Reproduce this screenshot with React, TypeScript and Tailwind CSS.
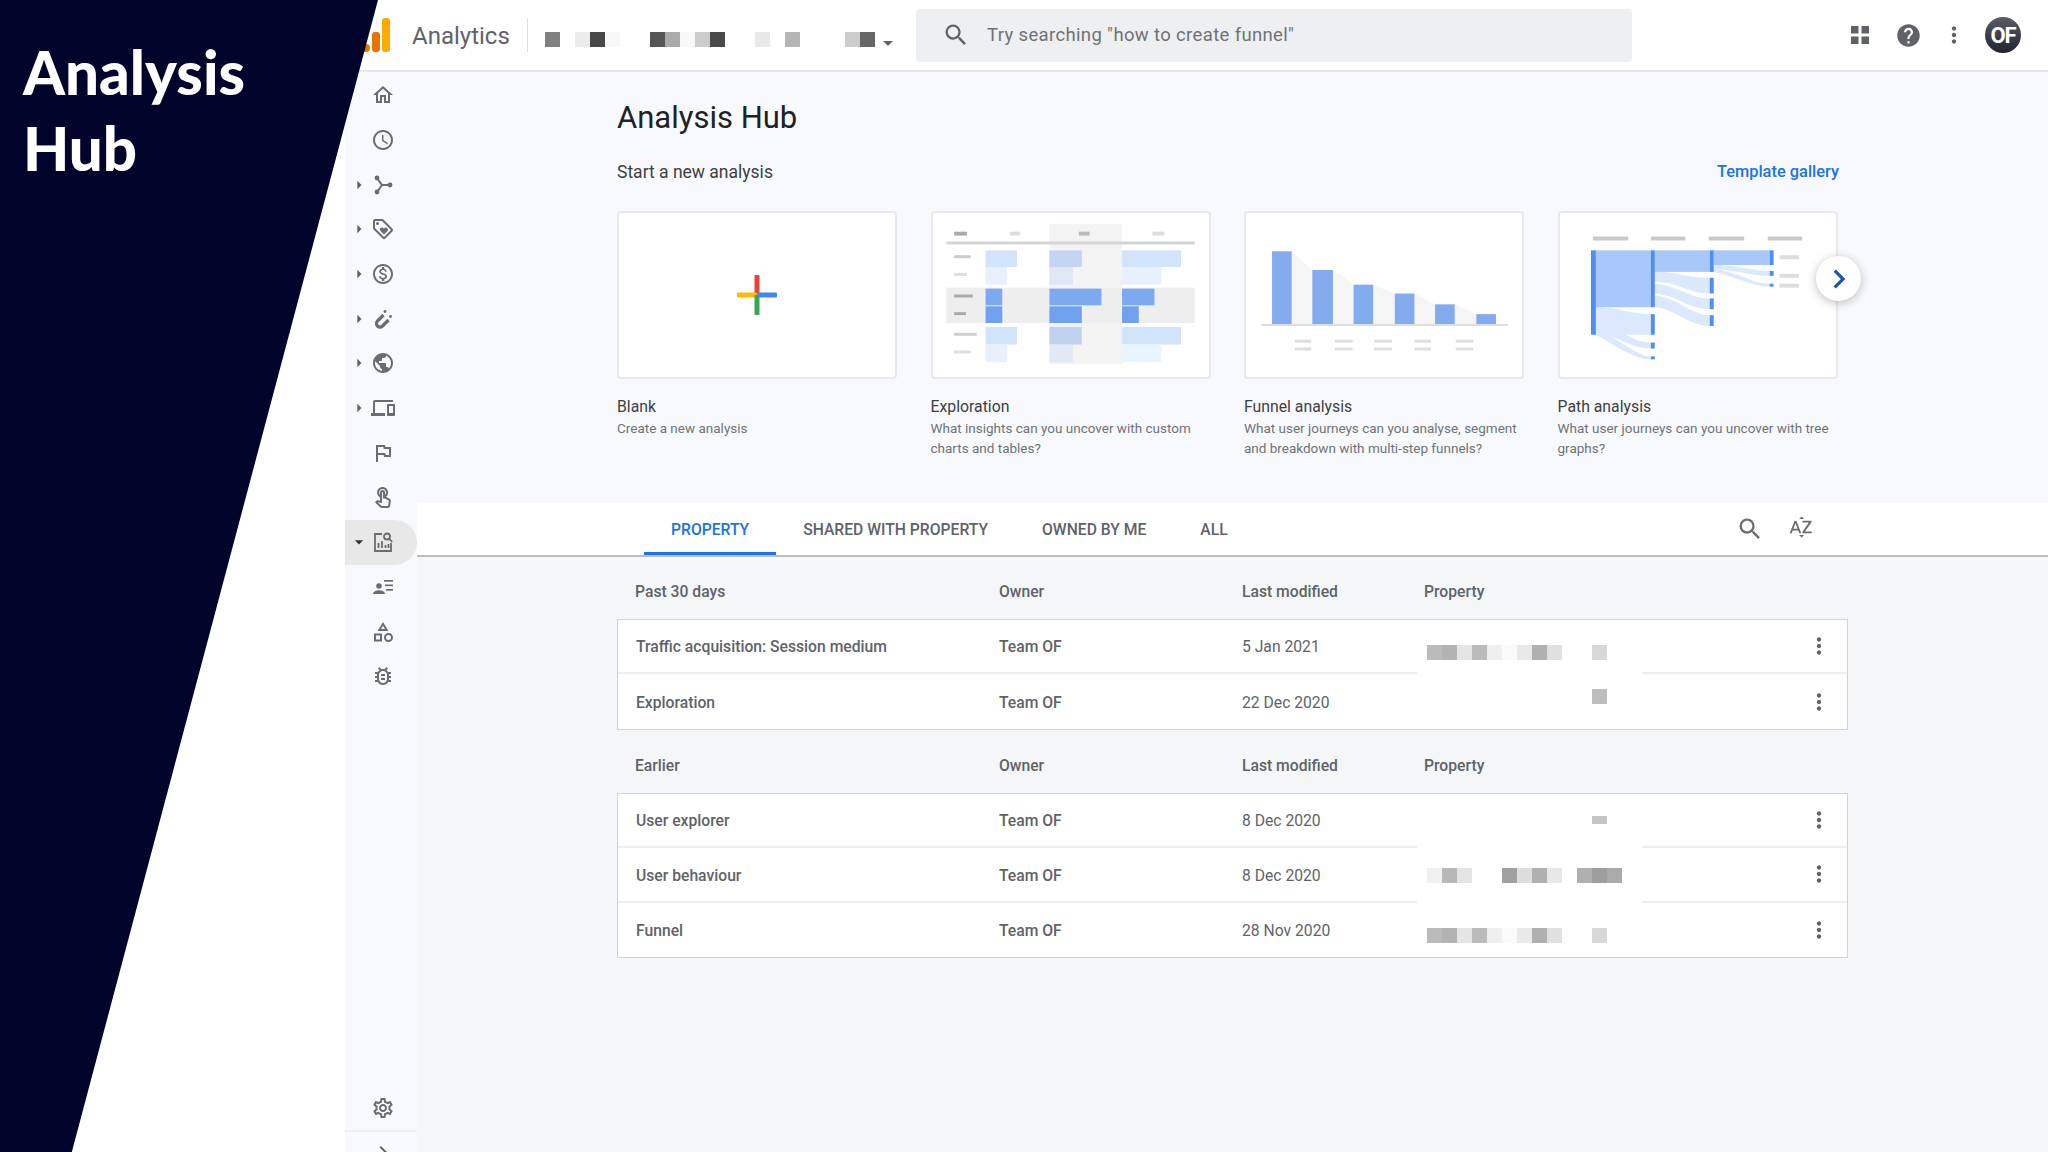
import React from "react";
import {
  MdOutlineHome,
  MdAccessTime,
  MdOutlineLoyalty,
  MdOutlineMonetizationOn,
  MdPublic,
  MdOutlineDevices,
  MdOutlineAssistantPhoto,
  MdOutlineTouchApp,
  MdOutlineCategory,
  MdOutlineBugReport,
  MdOutlineSettings,
  MdOutlineSortByAlpha,
  MdSearch,
  MdHelp,
  MdMoreVert,
  MdChevronRight,
  MdArrowRight,
  MdArrowDropDown,
} from "react-icons/md";

const AcquisitionIcon = ({ className }: { className?: string }) => (
  <svg viewBox="0 0 24 24" className={className}>
    <path d="M6 5l5 7h8M6 19l5-7" fill="none" stroke="currentColor" strokeWidth="2" />
    <circle cx="6" cy="5" r="2.4" fill="currentColor" />
    <circle cx="6" cy="19" r="2.4" fill="currentColor" />
    <circle cx="19" cy="12" r="2.4" fill="currentColor" />
  </svg>
);

const MagnetIcon = ({ className }: { className?: string }) => (
  <svg viewBox="0 0 24 24" className={className}>
    <path d="M12.500 8l-6 6a3.400 3.400 0 0 0 5 5l6-6" fill="none" stroke="currentColor" strokeWidth="3.200" />
    <circle cx="14" cy="4.500" r="1.400" fill="currentColor" />
    <circle cx="19.500" cy="9.500" r="1.400" fill="currentColor" />
  </svg>
);

const AnalysisIcon = ({ className }: { className?: string }) => (
  <svg viewBox="0 0 24 24" className={className} fill="none" stroke="currentColor">
    <path d="M11 4H4v17h16v-8" strokeWidth="1.800" />
    <path d="M7.500 18v-5M11 18v-7M14.500 18v-3M17.500 18v-4" strokeWidth="1.800" />
    <circle cx="16" cy="6.500" r="3" strokeWidth="1.800" />
    <path d="M18.200 8.800l3 3" strokeWidth="1.800" />
  </svg>
);

const UsersIcon = ({ className }: { className?: string }) => (
  <svg viewBox="0 0 24 24" className={className} fill="currentColor">
    <circle cx="8" cy="11" r="2.800" />
    <path d="M2 19c0-2.600 3.400-3.800 6-3.800s6 1.200 6 3.800z" />
    <rect x="13" y="5" width="9" height="1.700" />
    <rect x="14" y="9.500" width="8" height="1.700" />
    <rect x="15" y="14" width="7" height="1.700" />
  </svg>
);

const NAV = [
  { icon: MdOutlineHome },
  { icon: MdAccessTime },
  { icon: AcquisitionIcon, caret: true },
  { icon: MdOutlineLoyalty, caret: true },
  { icon: MdOutlineMonetizationOn, caret: true },
  { icon: MagnetIcon, caret: true },
  { icon: MdPublic, caret: true },
  { icon: MdOutlineDevices, caret: true },
  { icon: MdOutlineAssistantPhoto },
  { icon: MdOutlineTouchApp },
  { icon: AnalysisIcon, active: true },
  { icon: UsersIcon },
  { icon: MdOutlineCategory },
  { icon: MdOutlineBugReport },
];

const Mosaic = ({ cells, size = "h-[15px]" }: { cells: string[]; size?: string }) => (
  <div className="flex">
    {cells.map((c, i) => (
      <div key={i} className={`w-[15px] ${size} ${c}`} />
    ))}
  </div>
);

const HEADER_CELLS = [
  "bg-[#808080]", "", "bg-[#ececec]", "bg-[#484848]", "bg-[#f8f8f8]", "", "",
  "bg-[#555555]", "bg-[#aaaaaa]", "bg-[#f8f8f8]", "bg-[#cccccc]", "bg-[#4a4a4a]", "", "",
  "bg-[#e8e8e8]", "", "bg-[#b5b5b5]", "", "", "", "bg-[#cccccc]", "bg-[#666666]",
];

const LONG_CELLS = [
  "bg-[#bbbbbb]", "bg-[#b3b3b3]", "bg-[#e5e5e5]", "bg-[#bbbbbb]", "bg-[#efefef]", "bg-[#fafafa]",
  "bg-[#e9e9e9]", "bg-[#b0b0b0]", "bg-[#e0e0e0]", "", "", "bg-[#d8d8d8]",
];
const SINGLE_CELLS = ["", "", "", "", "", "", "", "", "", "", "", "bg-[#bdbdbd]"];
const PARTIAL_CELLS = ["", "", "", "", "", "", "", "", "", "", "", "bg-[#c5c5c5]"];
const BEHAVIOUR_CELLS = [
  "bg-[#f0f0f0]", "bg-[#b8b8b8]", "bg-[#e4e4e4]", "", "", "bg-[#a0a0a0]", "bg-[#dddddd]",
  "bg-[#b0b0b0]", "bg-[#e8e8e8]", "", "bg-[#b0b0b0]", "bg-[#9e9e9e]", "bg-[#aaaaaa]",
];

const Bars = ({ rects }: { rects: [number, number, number, number, string][] }) => (
  <>
    {rects.map(([x, y, w, h, fill], i) => (
      <rect key={i} x={x} y={y} width={w} height={h} fill={fill} />
    ))}
  </>
);

const ExplorationThumb = () => (
  <svg viewBox="0 0 280 167" className="h-full w-full blur-[0.6px]">
    <Bars
      rects={[
        [118, 11, 74, 143, "#f3f3f3"],
        [13, 76, 253, 36, "#eeeeee"],
        [13, 29, 253, 3, "#d4d4d4"],
        [21, 19, 13, 4, "#aaaaaa"],
        [78, 19, 10, 4, "#dddddd"],
        [148, 19, 11, 4, "#bbbbbb"],
        [223, 19, 12, 4, "#dddddd"],
        [21, 43, 17, 3, "#cccccc"],
        [21, 61, 13, 3, "#dddddd"],
        [21, 83, 19, 3, "#aaaaaa"],
        [21, 101, 12, 3, "#aaaaaa"],
        [21, 122, 23, 3, "#cccccc"],
        [21, 140, 17, 3, "#dddddd"],
        [53, 38, 32, 17, "#d2e3fc"],
        [53, 55, 22, 18, "#e8f0fe"],
        [53, 77, 17, 17, "#7baaf0"],
        [53, 95, 17, 17, "#6fa1ee"],
        [53, 116, 32, 18, "#d2e3fc"],
        [53, 134, 22, 18, "#e8f0fe"],
        [118, 38, 33, 17, "#c3d5f3"],
        [118, 55, 24, 18, "#e0e7f3"],
        [118, 77, 53, 17, "#7baaf0"],
        [118, 95, 33, 17, "#6fa1ee"],
        [118, 116, 33, 18, "#c0d2f0"],
        [118, 134, 24, 18, "#e0e9f5"],
        [192, 38, 60, 17, "#d2e3fc"],
        [192, 55, 40, 18, "#e8f0fe"],
        [192, 77, 33, 17, "#7baaf0"],
        [192, 95, 17, 17, "#6fa1ee"],
        [192, 116, 60, 18, "#d2e3fc"],
        [192, 134, 40, 18, "#e8f4fe"],
      ]}
    />
  </svg>
);

const FunnelThumb = () => (
  <svg viewBox="0 0 280 167" className="h-full w-full blur-[0.6px]">
    <path d="M46 39L67 58V114H46zM88 58L109 73V114H88zM129 73L151 82V114H129zM171 82L192 93V114H171zM212 93L234 103V114H212z" fill="#f5f5f5" />
    <Bars
      rects={[
        [26, 39, 20, 75, "#84abed"],
        [67, 58, 21, 56, "#84abed"],
        [109, 73, 20, 41, "#84abed"],
        [151, 82, 20, 32, "#84abed"],
        [192, 93, 20, 21, "#84abed"],
        [234, 103, 20, 11, "#84abed"],
        [15, 113, 251, 2, "#dddddd"],
        [49, 129, 17, 3, "#dddddd"],
        [90, 129, 18, 3, "#dddddd"],
        [130, 129, 18, 3, "#dddddd"],
        [171, 129, 17, 3, "#dddddd"],
        [213, 129, 18, 3, "#dddddd"],
        [49, 137, 17, 3, "#dddddd"],
        [90, 137, 18, 3, "#dddddd"],
        [130, 137, 18, 3, "#dddddd"],
        [171, 137, 17, 3, "#dddddd"],
        [213, 137, 18, 3, "#dddddd"],
      ]}
    />
  </svg>
);

const PathThumb = () => (
  <svg viewBox="0 0 280 167" className="h-full w-full blur-[0.6px]">
    <path
      d="M36 96C60 96 70 103 92 103V124H36zM36 112C60 118 75 132 92 132V138C75 138 60 128 36 120zM36 118C60 128 78 146 92 146V149C74 149 55 134 36 124z"
      fill="#dbe8fd"
    />
    <path
      d="M96 60C120 60 130 66 152 66V82C130 82 120 70 96 70zM96 72C120 74 132 87 152 87V98C130 98 120 84 96 82zM96 84C120 86 132 104 152 104V115C130 115 118 98 96 96z"
      fill="#dbe8fd"
    />
    <path d="M156 53C178 53 195 59 213 59V64C195 64 178 58 156 57zM156 57C178 59 195 72 213 72V75C195 75 176 64 156 60z" fill="#dbe8fd" />
    <Bars
      rects={[
        [33, 24, 36, 4, "#c8c8c8"],
        [92, 24, 35, 4, "#c8c8c8"],
        [151, 24, 36, 4, "#c8c8c8"],
        [211, 24, 35, 4, "#c8c8c8"],
        [36, 38, 56, 58, "#a8c7fa"],
        [96, 38, 56, 22, "#a8c7fa"],
        [156, 38, 57, 15, "#a8c7fa"],
        [31, 38, 5, 86, "#4f8ff0"],
        [92, 38, 4, 58, "#4f8ff0"],
        [92, 103, 4, 21, "#4f8ff0"],
        [92, 132, 4, 6, "#4f8ff0"],
        [92, 146, 4, 3, "#4f8ff0"],
        [152, 38, 4, 22, "#4f8ff0"],
        [152, 66, 4, 16, "#4f8ff0"],
        [152, 87, 4, 11, "#4f8ff0"],
        [152, 104, 4, 11, "#4f8ff0"],
        [213, 38, 4, 15, "#4f8ff0"],
        [213, 59, 4, 5, "#4f8ff0"],
        [213, 72, 4, 3, "#4f8ff0"],
        [223, 43, 20, 4, "#dddddd"],
        [223, 62, 20, 4, "#dddddd"],
        [223, 72, 20, 4, "#dddddd"],
      ]}
    />
  </svg>
);

const BlankThumb = () => (
  <div className="flex h-full w-full items-center justify-center">
    <svg viewBox="0 0 40 40" className="h-[40px] w-[40px]">
      <rect x="17.500" y="0" width="5" height="20" rx="1" fill="#ea4335" />
      <rect x="0" y="17.500" width="20" height="5" rx="1" fill="#fbbc04" />
      <rect x="17.500" y="20" width="5" height="20" rx="1" fill="#34a853" />
      <rect x="20" y="17.500" width="20" height="5" rx="1" fill="#4285f4" />
    </svg>
  </div>
);

const CARDS = [
  { name: "Blank", desc: "Create a new analysis", thumb: BlankThumb },
  { name: "Exploration", desc: "What insights can you uncover with custom charts and tables?", thumb: ExplorationThumb },
  { name: "Funnel analysis", desc: "What user journeys can you analyse, segment and breakdown with multi-step funnels?", thumb: FunnelThumb },
  { name: "Path analysis", desc: "What user journeys can you uncover with tree graphs?", thumb: PathThumb },
];

const TABS = ["Property", "Shared with property", "Owned by me", "All"];

const TABLES = [
  {
    label: "Past 30 days",
    head: "h-[62px] pt-[8px]",
    rows: [
      { name: "Traffic acquisition: Session medium", date: "5 Jan 2021", cells: LONG_CELLS, top: "mt-[25px]" },
      { name: "Exploration", date: "22 Dec 2020", cells: SINGLE_CELLS, top: "mt-[15px]" },
    ],
  },
  {
    label: "Earlier",
    head: "h-[63px] pt-[9px]",
    rows: [
      { name: "User explorer", date: "8 Dec 2020", cells: PARTIAL_CELLS, top: "mt-[22px]", short: true },
      { name: "User behaviour", date: "8 Dec 2020", cells: BEHAVIOUR_CELLS, top: "mt-[20px]" },
      { name: "Funnel", date: "28 Nov 2020", cells: LONG_CELLS, top: "mt-[25px]" },
    ],
  },
];

export default function App() {
  return (
    <div className="relative flex h-[1152px] w-[2048px] flex-col overflow-hidden bg-white font-['Roboto',sans-serif]">
      <header className="flex h-[72px] shrink-0 items-center border-b-2 border-[#e6e6e8] bg-white pl-[362px] pr-[27px]">
        <svg viewBox="0 0 30 34" className="h-[34px] w-[30px]">
          <rect x="20" y="0" width="8" height="34" rx="3" fill="#f9ab00" />
          <rect x="10" y="14" width="8" height="20" rx="3" fill="#e37400" />
          <circle cx="4" cy="30" r="4" fill="#e37400" />
        </svg>
        <span className="ml-[20px] mt-[2px] w-[115px] text-[24px] text-[#5f6368]">Analytics</span>
        <div className="h-[34px] w-px bg-[#e0e0e0]" />
        <div className="ml-[17px] mt-[8px] flex items-center">
          <Mosaic cells={HEADER_CELLS} />
          <MdArrowDropDown className="ml-[1px] mt-[8px] h-[24px] w-[24px] text-[#5f6368]" />
        </div>
        <div className="ml-[16px] flex h-[53px] w-[716px] items-center rounded bg-[#eeeff0] pl-[26px]">
          <MdSearch className="h-[28px] w-[28px] text-[#5f6368]" />
          <span className="ml-[17px] mt-[1px] text-[18.500px] tracking-[0.35px] text-[#6f7275]">Try searching "how to create funnel"</span>
        </div>
        <div className="ml-auto flex items-center">
          <svg viewBox="0 0 18 18" className="h-[18px] w-[18px] text-[#5f6368]" fill="currentColor">
            <rect x="0" y="0" width="7.500" height="7.500" />
            <rect x="10.500" y="0" width="7.500" height="7.500" />
            <rect x="0" y="10.500" width="7.500" height="7.500" />
            <rect x="10.500" y="10.500" width="7.500" height="7.500" />
          </svg>
          <MdHelp className="ml-[26px] h-[27px] w-[27px] text-[#5f6368]" />
          <MdMoreVert className="ml-[19px] h-[26px] w-[26px] text-[#5f6368]" />
          <div className="ml-[18px] flex h-[36px] w-[36px] items-center justify-center rounded-full bg-gradient-to-b from-[#5a5c66] to-[#23252e] text-[22px] font-bold tracking-[-1px] text-white">
            OF
          </div>
        </div>
      </header>

      <div className="flex min-h-0 flex-1 pl-[345px]">
        <nav className="flex h-[1082px] w-[72px] shrink-0 flex-col bg-[#f8f9fc] pt-[1px]">
          {NAV.map((item, i) => (
            <div
              key={i}
              className={`flex h-[44.700px] shrink-0 items-center rounded-r-full ${item.active ? "bg-[#e8e8e9]" : ""}`}
            >
              <div className="ml-[4px] w-[20px] text-[#5f6368]">
                {item.caret && <MdArrowRight className="h-[20px] w-[20px]" />}
                {item.active && <MdArrowDropDown className="h-[20px] w-[20px] text-[#333333]" />}
              </div>
              <item.icon className="ml-[2px] h-[24px] w-[24px] text-[#6a6d70]" />
            </div>
          ))}
          <div className="mt-auto flex h-[44px] items-center pl-[26px]">
            <MdOutlineSettings className="h-[24px] w-[24px] text-[#6a6d70]" />
          </div>
          <div className="flex h-[24px] shrink-0 border-t-2 border-[#eeeeef] pl-[26px] pt-[8px]">
            <MdChevronRight className="h-[24px] w-[24px] shrink-0 text-[#5f6368]" />
          </div>
        </nav>

        <main className="flex min-w-0 flex-1 flex-col bg-[#f5f6f8]">
          <section className="h-[431px] shrink-0 bg-[#f8f9fc] pl-[200px] pr-[209px] pt-[25px]">
            <h1 className="h-[42px] text-[31px] leading-[42px] text-[#202124]">Analysis Hub</h1>
            <div className="mt-[20px] flex items-center justify-between">
              <h2 className="text-[17.500px] text-[#3c4043]">Start a new analysis</h2>
              <a className="text-[16.400px] font-medium text-[#1a73e8]">Template gallery</a>
            </div>
            <div className="relative mt-[26px] flex gap-[33.500px]">
              {CARDS.map((card) => (
                <div key={card.name} className="w-[280px] shrink-0">
                  <div className="h-[168px] rounded border-2 border-[#e8e9eb] bg-white">
                    <card.thumb />
                  </div>
                  <div className="mt-[18px] text-[15.800px] leading-[20px] text-[#3c4043]">{card.name}</div>
                  <p className="mt-[1px] text-[13.500px] leading-[20px] text-[#6f7377]">{card.desc}</p>
                </div>
              ))}
              <button className="absolute left-[1199px] top-[45px] flex h-[45px] w-[45px] items-center justify-center rounded-full bg-white shadow-[0_2px_10px_rgba(0,0,0,0.25)]">
                <MdChevronRight className="h-[38px] w-[38px] text-[#1a56b0]" />
              </button>
            </div>
          </section>

          <div className="flex h-[54px] shrink-0 items-stretch border-b-2 border-[#bdbdbd] bg-white pl-[227px]">
            {TABS.map((tab, i) => (
              <div
                key={tab}
                className={`flex items-center border-b-[3px] px-[27px] pt-[5px] text-[15.700px] font-medium uppercase ${
                  i === 0 ? "border-[#1a73e8] text-[#1a73e8]" : "border-transparent text-[#5f6368]"
                }`}
              >
                {tab}
              </div>
            ))}
            <MdSearch className="ml-[481px] mt-[12px] h-[28px] w-[28px] text-[#6a6d70]" />
            <MdOutlineSortByAlpha className="ml-[24px] mt-[11px] h-[26px] w-[26px] text-[#6a6d70]" />
          </div>

          <div className="ml-[200px] w-[1231px]">
            {TABLES.map((table) => (
              <div key={table.label}>
                <div className={`flex items-center pl-[18px] text-[15.700px] font-medium text-[#5f6368] ${table.head}`}>
                  <span className="w-[364px]">{table.label}</span>
                  <span className="w-[243px]">Owner</span>
                  <span className="w-[182px]">Last modified</span>
                  <span>Property</span>
                </div>
                <div className="border border-[#d2d3d6] bg-white">
                  {table.rows.map((row, i) => {
                    const divider = i < table.rows.length - 1 ? "border-b-2 border-[#eeeeef]" : "";
                    return (
                      <div key={row.name} className="flex h-[54.400px] text-[15.700px] text-[#5f6368]">
                        <div className={`flex w-[799px] items-center pt-[2px] ${divider}`}>
                          <span className="w-[381px] pl-[18px] font-medium">{row.name}</span>
                          <span className="w-[243px] font-medium">Team OF</span>
                          <span>{row.date}</span>
                        </div>
                        <div className={`w-[225px] pl-[10px] ${row.top}`}>
                          <Mosaic cells={row.cells} size={row.short ? "h-[8px]" : "h-[15px]"} />
                        </div>
                        <div className={`flex flex-1 items-center justify-end pr-[15px] ${divider}`}>
                          <MdMoreVert className="h-[26px] w-[26px] text-[#5f6368]" />
                        </div>
                      </div>
                    );
                  })}
                </div>
              </div>
            ))}
          </div>
        </main>
      </div>

      <div className="absolute inset-y-0 left-0 w-[378px] bg-[#03042c] [clip-path:polygon(0_0,100%_0,19%_100%,0_100%)]">
        <h1 className="pl-[23px] pt-[34px] font-['Lato',sans-serif] text-[60px] font-black leading-[76px] text-white">
          Analysis
          <br />
          Hub
        </h1>
      </div>
    </div>
  );
}
